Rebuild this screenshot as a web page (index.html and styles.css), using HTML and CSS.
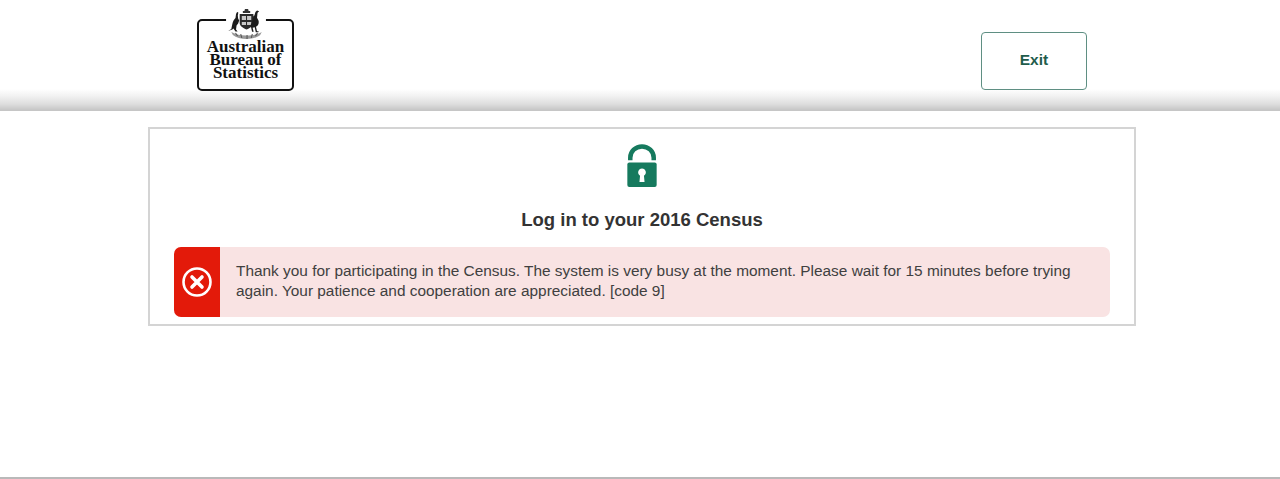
FILE: index.html
```html
<!DOCTYPE html>
<html lang="en">
<head>
<meta charset="utf-8">
<title>Log in to your 2016 Census</title>
<link rel="stylesheet" href="styles.css">
</head>
<body>
<header class="site-header">
  <div class="logo">
    <div class="logo-box">Australian<br>Bureau of<br>Statistics</div>
    <svg class="crest" width="42" height="32" viewBox="0 0 40 32" preserveAspectRatio="none" aria-hidden="true">
      <rect x="1" y="11" width="38" height="4" fill="#fff"/>
      <path d="M19 1h3l.5 2h1.500v2h-7v-2h1.500z" fill="#333"/>
      <path d="M14 6h13v9c0 3-3 5-6.500 6.500C17 20 14 18 14 15z" fill="#2a2a2a"/>
      <path d="M16 8h4v4h-4zM21 8h4v4h-4zM16 14h4v3h-4zM21 14h4v3h-4z" fill="#c8c8c8"/>
      <path d="M3 23l3-2 1-5c.5-3 2-5 3-6l.5-4 1-2 1.200.5-.5 3 .3 3 1 2-1 3-1.500 2-.5 4 1.500 2h-2l-2-3-1 1z" fill="#1c1c1c"/>
      <path d="M27 8l1-.5 1-3.500 1.500-1.500 2 .8-1.500 1.500-.5 5 1.500 3c.5 3-.5 5-2.500 6l1 4.500h1.500l-.2 1h-2.500l-1-5-2 .5 1 4h-1.500l-1-4.500-.5-2 1.500-3.500z" fill="#1c1c1c"/>
      <path d="M6 24c4 2.500 9 3.500 14.500 3.500S31 26.500 35 24l-1.500 3c-3 2.500-8 4-13 4s-10-1.500-13-4z" fill="#9a9a9a"/>
      <path d="M10 25l2 3M15 26l1 4M21 27v4M26 26l-1 4M31 25l-2 3" stroke="#555" stroke-width="1"/>
    </svg>
  </div>
  <a class="exit-btn" href="#">Exit</a>
</header>
<main class="panel">
  <svg class="lock" width="32" height="43" viewBox="0 0 32 44" aria-hidden="true">
    <path d="M4 16.500v-2.500a12 11.500 0 0 1 24 0v2.500" fill="none" stroke="#167a5e" stroke-width="4.600"/>
    <path d="M3 19h26a2 2 0 0 1 2 2v21a2 2 0 0 1-2 2H3a2 2 0 0 1-2-2V21a2 2 0 0 1 2-2z" fill="#167a5e"/>
    <path d="M16 25a4 4 0 0 1 2 7.400l.6 6.600h-5.200l.6-6.600a4 4 0 0 1 2-7.400z" fill="#fff"/>
  </svg>
  <h1 class="title">Log in to your 2016 Census</h1>
  <div class="alert">
    <div class="alert-icon">
      <svg width="30" height="30" viewBox="0 0 30 30" aria-hidden="true">
        <circle cx="15" cy="15" r="13.500" fill="none" stroke="#fff" stroke-width="2.600"/>
        <path d="M10 10l10 10M20 10l-10 10" stroke="#fff" stroke-width="3.600" stroke-linecap="round"/>
      </svg>
    </div>
    <p class="alert-text">Thank you for participating in the Census. The system is very busy at the moment. Please wait for 15 minutes before trying again. Your patience and cooperation are appreciated. [code 9]</p>
  </div>
</main>
<footer class="site-footer"></footer>
</body>
</html>
```
FILE: styles.css
```css
* { box-sizing: border-box; }
html, body { margin: 0; height: 100%; }
body {
  background: #fff;
  font-family: "Liberation Sans", Arial, sans-serif;
  color: #333;
  display: flex;
  flex-direction: column;
  height: 479px;
  overflow: hidden;
}
.site-header {
  height: 111px;
  flex: none;
  display: flex;
  justify-content: space-between;
  align-items: flex-start;
  padding: 0 193px 0 197px;
  background: linear-gradient(to bottom, #fff 0, #fff 89px, #f2f2f2 96px, #dedede 104px, #c6c6c6 110px, #c6c6c6 111px);
}
.logo {
  width: 97px;
  height: 92px;
  position: relative;
}
.crest {
  position: absolute;
  top: 8px;
  left: 28px;
}
.logo-box {
  margin-top: 19px;
  width: 97px;
  height: 72px;
  border: 2px solid #111;
  border-radius: 5px;
  background: #fff;
  font-family: "Liberation Serif", serif;
  font-weight: 700;
  font-size: 17px;
  line-height: 13px;
  color: #111;
  text-align: center;
  padding-top: 19px;
}
.exit-btn {
  margin-top: 32px;
  width: 106px;
  height: 58px;
  border: 1px solid #5f8f83;
  border-radius: 4px;
  background: #fff;
  color: #1f5c4c;
  font-weight: 700;
  font-size: 15.500px;
  text-decoration: none;
  display: flex;
  align-items: center;
  justify-content: center;
  padding-bottom: 2px;
}
.panel {
  margin: 16px 0 0 148px;
  width: 988px;
  height: 199px;
  flex: none;
  border: 2px solid #d4d4d4;
  padding: 15px 24px 0;
  display: flex;
  flex-direction: column;
  align-items: center;
}
.lock { flex: none; display: block; }
.title {
  margin: 21px 0 0;
  font-size: 18.500px;
  line-height: 24px;
  font-weight: 700;
  color: #333;
}
.alert {
  margin-top: 15px;
  width: 100%;
  height: 70px;
  flex: none;
  display: flex;
  background: #f9e3e3;
  border-radius: 7px;
  overflow: hidden;
}
.alert-icon {
  width: 46px;
  flex: none;
  background: #e31a0a;
  display: flex;
  align-items: center;
  justify-content: center;
}
.alert-text {
  margin: 0;
  padding: 14px 30px 0 16px;
  font-size: 15.400px;
  line-height: 20px;
  color: #404040;
}
.site-footer {
  margin-top: 151px;
  height: 2px;
  flex: none;
  background: #b9b9b9;
}
```
